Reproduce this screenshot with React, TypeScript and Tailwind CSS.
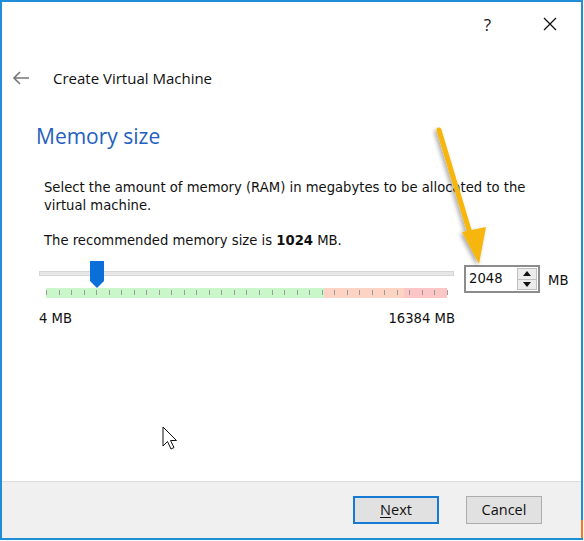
import React from "react";

const body = "[font-family:'DejaVu_Sans',Tahoma,sans-serif]";
const ui = "[font-family:'Open_Sans','Noto_Sans',sans-serif]";

const Ticks = () => {
  // 32 intervals of 512 MB across the strip
  const ticks = Array.from({ length: 33 }, (_, i) => i);
  return (
    <div className="relative h-[10px] w-[401px] ml-[7px] flex">
      <div className="h-full w-[278px] bg-[#c9f7c9]" />
      <div className="h-full w-[80px] bg-[#fdd3c3]" />
      <div className="h-full w-[43px] bg-[#fcc6c6]" />
      {ticks.map((i) => (
        <div
          key={i}
          className="absolute top-[2px] h-[5px] w-px bg-[#9a9a9a]"
          style={{ left: `${i * 12.53}px` }}
        />
      ))}
    </div>
  );
};

export default function App() {
  return (
    <div className="w-[584px] h-[541px] bg-white overflow-hidden">
      <div className="relative w-[583px] h-[540px] border-2 border-[#1e8fd6] flex flex-col bg-white">
        {/* title bar */}
        <div className="h-[42px] flex items-center justify-end pr-[26px] gap-[52px] pt-[2px]">
          <span className={`${ui} text-[17px] font-medium text-[#111] leading-none`}>?</span>
          <svg width="14" height="14" viewBox="0 0 14 14" className="mr-[-2px]">
            <path d="M1 1 L13 13 M13 1 L1 13" stroke="#111" strokeWidth="1.3" />
          </svg>
        </div>

        {/* header */}
        <div className="flex items-center h-[26px] mt-[21px] pl-[10px]">
          <svg width="18" height="14" viewBox="0 0 18 14">
            <path d="M8 1 L2 7 L8 13 M2 7 H17" stroke="#777" strokeWidth="1.6" fill="none" />
          </svg>
          <span className={`${ui} text-[15px] text-[#111] ml-[23px]`}>Create Virtual Machine</span>
        </div>

        {/* content */}
        <div className="flex-1 pl-[34px] pt-[31px]">
          <div className={`${ui} text-[21px] leading-[28px] text-[#2360c0]`}>Memory size</div>
          <p className={`${body} text-[13.2px] leading-[18px] text-[#111] mt-[29px] ml-[8px] w-[500px]`}>
            Select the amount of memory (RAM) in megabytes to be allocated to the virtual machine.
          </p>
          <p className={`${body} text-[13.2px] leading-[18px] text-[#111] mt-[17px] ml-[8px]`}>
            The recommended memory size is <b>1024</b> MB.
          </p>

          {/* slider row */}
          <div className="flex items-start mt-[11px] ml-[3px]">
            <div className="w-[416px]">
              <div className="relative h-[27px]">
                <div className="absolute left-0 right-[1px] top-[10px] h-[5px] bg-[#e7e7e7] border border-[#d6d6d6]" />
                <svg className="absolute left-[50px] top-0" width="16" height="27" viewBox="0 0 16 27">
                  <path d="M1 0 H15 V20 L8 27 L1 20 Z" fill="#0a6fd8" />
                </svg>
              </div>
              <Ticks />
              <div className={`${body} flex justify-between text-[13.2px] text-[#111] mt-[11px]`}>
                <span>4 MB</span>
                <span>16384 MB</span>
              </div>
            </div>
            <div className="ml-[9px] mt-[4px] w-[76px] h-[28px] border-2 border-[#8c8c8c] flex items-center bg-white">
              <span className={`${body} text-[13.2px] text-[#111] ml-[3px] flex-1`}>2048</span>
              <div className="w-[20px] h-[22px] mr-[1px] flex flex-col border border-[#c0c0c0]">
                <div className="flex-1 flex items-center justify-center bg-[#ececec] border-b border-[#c0c0c0]">
                  <svg width="8" height="5" viewBox="0 0 8 5"><path d="M0 5 L4 0 L8 5 Z" fill="#111" /></svg>
                </div>
                <div className="flex-1 flex items-center justify-center bg-[#ececec]">
                  <svg width="8" height="5" viewBox="0 0 8 5"><path d="M0 0 L4 5 L8 0 Z" fill="#111" /></svg>
                </div>
              </div>
            </div>
            <span className={`${body} text-[13.2px] text-[#111] ml-[8px] mt-[10px]`}>MB</span>
          </div>
        </div>

        {/* footer */}
        <div className="h-[57px] bg-[#f0f0f0] border-t border-[#dcdcdc] flex items-start justify-end gap-[27px] pr-[39px] pt-[14px]">
          <button className={`${ui} w-[86px] h-[28px] border-2 border-[#1679d4] bg-[#e1e1e1] text-[14.5px] text-[#111] leading-none`}>
            <span className="underline underline-offset-2">N</span>ext
          </button>
          <button className={`${ui} w-[76px] h-[28px] border border-[#adadad] bg-[#e1e1e1] text-[14.5px] text-[#111] leading-none`}>
            Cancel
          </button>
        </div>

        {/* annotation arrow */}
        <svg className="absolute left-[420px] top-[118px]" width="80" height="160" viewBox="0 0 80 160">
          <defs>
            <filter id="sh" x="-50%" y="-50%" width="200%" height="200%">
              <feDropShadow dx="-2" dy="2" stdDeviation="2" floodColor="#000" floodOpacity="0.35" />
            </filter>
          </defs>
          <g filter="url(#sh)">
            <path d="M17 10 L50 120" stroke="#f6b60a" strokeWidth="5" strokeLinecap="round" />
            <path d="M40 112 L57 144 L64 107 Z" fill="#f6b60a" />
          </g>
        </svg>

        {/* mouse cursor */}
        <svg className="absolute left-[160px] top-[424px]" width="20" height="28" viewBox="0 0 20 28">
          <path d="M1 1 V20 L5.5 15.5 L9 23 L12 21.5 L8.5 14.5 H14.5 Z" fill="#fff" stroke="#111" strokeWidth="1" strokeLinejoin="round" />
        </svg>

        <div className="absolute right-[-2px] bottom-[0px] w-[2px] h-[18px] bg-[#f07a2a]" />
      </div>
    </div>
  );
}
